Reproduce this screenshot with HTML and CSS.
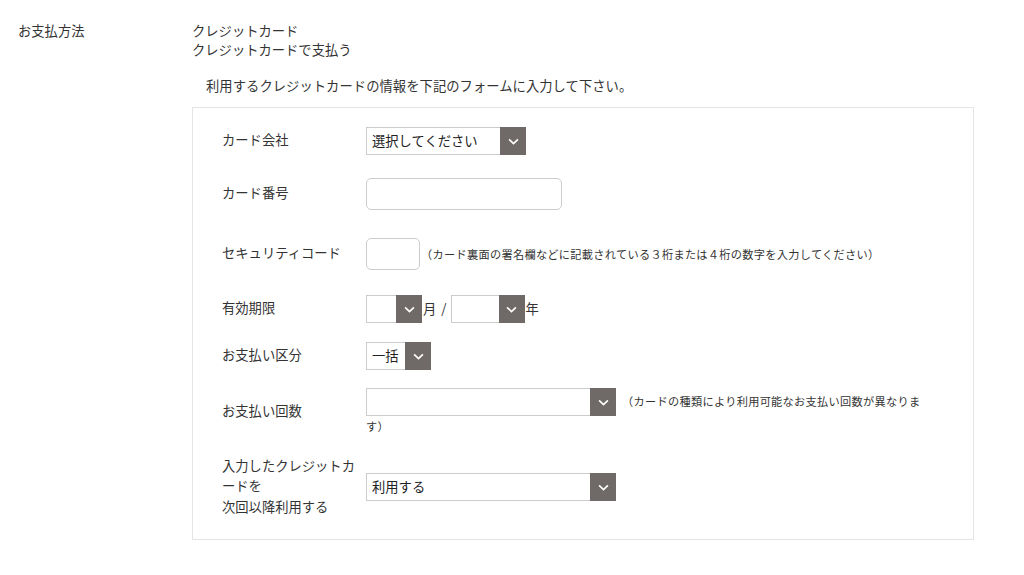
FILE: index.html
```html
<!DOCTYPE html>
<html lang="ja">
<head>
    <meta charset="utf-8">
    <title>お支払方法</title>
    <link rel="stylesheet" href="styles.css">
</head>
<body>
<div class="payment">
    <div class="payment-label">お支払方法</div>
    <div class="payment-body">
        <div class="method">
            クレジットカード<br>
            クレジットカードで支払う
        </div>
        <p class="intro">利用するクレジットカードの情報を下記のフォームに入力して下さい。</p>

        <div class="card-box">
            <table class="card-form">
                <tr class="row-company">
                    <td class="field-label">カード会社</td>
                    <td>
                        <span class="select select-company">
                            <select name="company"><option>選択してください</option></select>
                            <span class="select-arrow"><svg viewBox="0 0 10 6"><path d="M1 1l4 4 4-4"/></svg></span>
                        </span>
                    </td>
                </tr>
                <tr class="row-number">
                    <td class="field-label">カード番号</td>
                    <td><input type="text" class="text-input input-number" name="number"></td>
                </tr>
                <tr class="row-cvc">
                    <td class="field-label">セキュリティコード</td>
                    <td><input type="text" class="text-input input-cvc" name="cvc"><span class="note note-cvc">（カード裏面の署名欄などに記載されている３桁または４桁の数字を入力してください）</span></td>
                </tr>
                <tr class="row-expiry">
                    <td class="field-label">有効期限</td>
                    <td>
                        <span class="select select-month">
                            <select name="month"><option></option></select>
                            <span class="select-arrow"><svg viewBox="0 0 10 6"><path d="M1 1l4 4 4-4"/></svg></span>
                        </span><span class="unit">月</span><span class="slash">/</span><span class="select select-year">
                            <select name="year"><option></option></select>
                            <span class="select-arrow"><svg viewBox="0 0 10 6"><path d="M1 1l4 4 4-4"/></svg></span>
                        </span><span class="unit">年</span>
                    </td>
                </tr>
                <tr class="row-type">
                    <td class="field-label">お支払い区分</td>
                    <td>
                        <span class="select select-type">
                            <select name="type"><option>一括</option></select>
                            <span class="select-arrow"><svg viewBox="0 0 10 6"><path d="M1 1l4 4 4-4"/></svg></span>
                        </span>
                    </td>
                </tr>
                <tr class="row-count">
                    <td class="field-label">お支払い回数</td>
                    <td><span class="select select-wide">
                            <select name="count"><option></option></select>
                            <span class="select-arrow"><svg viewBox="0 0 10 6"><path d="M1 1l4 4 4-4"/></svg></span>
                        </span><span class="note note-count">（カードの種類により利用可能なお支払い回数が異なります）</span></td>
                </tr>
                <tr class="row-save">
                    <td class="field-label">入力したクレジットカードを<br>次回以降利用する</td>
                    <td>
                        <span class="select select-wide">
                            <select name="save"><option>利用する</option></select>
                            <span class="select-arrow"><svg viewBox="0 0 10 6"><path d="M1 1l4 4 4-4"/></svg></span>
                        </span>
                    </td>
                </tr>
            </table>
        </div>
    </div>
</div>
</body>
</html>
```

FILE: styles.css
```css
body {
    margin: 0;
    background: #fff;
    color: #333;
    font-family: "Noto Sans CJK JP", "Noto Sans", sans-serif;
    font-size: 13.3px;
}

.payment {
    display: grid;
    grid-template-columns: 174px 782px;
    padding: 21px 0 0 18px;
}

.payment-label,
.method {
    line-height: 19px;
}

.intro {
    margin: 17px 0 12px 14px;
    line-height: 19px;
    letter-spacing: 0.05px;
}

/* カード入力欄 */
.card-box {
    border: 1px solid #e4e4e4;
    padding: 0 50px 21px 29px;
}

.card-form {
    width: 100%;
    border-collapse: collapse;
    line-height: 20.5px;
}

.card-form td {
    padding: 0;
    vertical-align: middle;
}

.card-form .field-label {
    width: 136px;
    padding-right: 8px;
    position: relative;
    top: -1px;
}

.row-company td { padding-top: 19px; }
.row-number td { padding-top: 23px; }
.row-cvc td { padding-top: 28px; }
.row-expiry td { padding-top: 25px; }
.row-type td { padding-top: 19px; }
.row-count td { padding-top: 18px; }
.row-save td { padding-top: 20px; }

.select {
    display: inline-flex;
    vertical-align: middle;
    box-sizing: border-box;
    height: 28px;
    border: 1px solid #ccc;
    background: #fff;
}

.select select {
    flex: 1;
    min-width: 0;
    appearance: none;
    -webkit-appearance: none;
    border: 0;
    background: transparent;
    padding: 0 5px;
    font: inherit;
    color: #222;
    outline: none;
}

.select-arrow {
    display: flex;
    align-items: center;
    justify-content: center;
    width: 26px;
    margin: -1px -1px -1px 0;
    background: #6f6967;
}

.select-arrow svg {
    width: 11px;
    height: 7px;
    fill: none;
    stroke: #fff;
    stroke-width: 1.5;
}

.select-company { width: 160px; }
.select-month { width: 56px; }
.select-year { width: 74px; }
.select-type { width: 65px; }
.select-wide { width: 250px; }

.text-input {
    box-sizing: border-box;
    height: 32px;
    border: 1px solid #ccc;
    border-radius: 5px;
    vertical-align: middle;
    font: inherit;
    outline: none;
}

.input-number { width: 196px; }
.input-cvc { width: 54px; }

.unit {
    margin-left: 1px;
    vertical-align: middle;
}

.slash {
    margin: 0 4px 0 5px;
    vertical-align: middle;
}

.note {
    font-size: 11.2px;
    letter-spacing: 0.3px;
}

.note-cvc {
    margin-left: 1px;
    vertical-align: middle;
}

.note-count {
    margin-left: 6px;
}
```
